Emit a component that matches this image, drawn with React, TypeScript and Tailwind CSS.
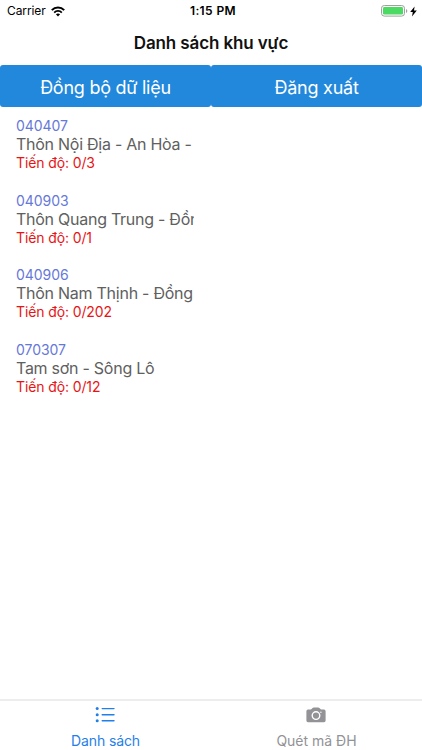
const areas = [
  { code: '040407', name: 'Thôn Nội Địa - An Hòa -', progress: '0/3' },
  { code: '040903', name: 'Thôn Quang Trung - Đồn', progress: '0/1' },
  { code: '040906', name: 'Thôn Nam Thịnh - Đồng', progress: '0/202' },
  { code: '070307', name: 'Tam sơn - Sông Lô', progress: '0/12' },
];

function StatusBar() {
  return (
    <div className="grid h-[22px] grid-cols-3 items-center pl-[7px] pr-[5px] text-black">
      <div className="flex items-center gap-[5px]">
        <span className="text-[12px] leading-none tracking-[-0.1px]">Carrier</span>
        <svg width="14" height="11" viewBox="0 0 14 11" fill="none" stroke="currentColor">
          <path d="M0.8 4.1C4.2 0.5 9.8 0.5 13.2 4.1" strokeWidth="2" />
          <path d="M3.2 6.6C5.3 4.4 8.7 4.4 10.8 6.6" strokeWidth="1.8" />
          <path d="M7 10.4L4.9 8.2C6.1 7.1 7.9 7.1 9.1 8.2Z" fill="currentColor" stroke="none" />
        </svg>
      </div>
      <span className="pl-[2px] text-center text-[12px] font-semibold leading-none tracking-[0.4px]">1:15 PM</span>
      <div className="flex items-center justify-end gap-[2px]">
        <svg width="27" height="12" viewBox="0 0 27 12">
          <rect x="0.5" y="0.5" width="23" height="10.6" rx="2.8" fill="#fff" stroke="#a0a0a0" />
          <rect x="2" y="2" width="20" height="7.6" rx="1.4" fill="#4cd964" />
          <path d="M25 4v4q1.3-.6 1.3-2T25 4Z" fill="#a0a0a0" />
        </svg>
        <svg width="7" height="11" viewBox="0 0 7 11" fill="currentColor">
          <path d="M4.6 0.5L0.2 6h2.6L2 10.5L6.8 4.6H4L4.6 0.5Z" />
        </svg>
      </div>
    </div>
  );
}

function AreaItem({ code, name, progress }: { code: string; name: string; progress: string }) {
  return (
    <li className="h-[74.7px] w-[178px]">
      <p className="text-[14px] leading-[18px] tracking-[-0.05px] text-[#6678d8]">{code}</p>
      <p className="overflow-hidden whitespace-nowrap text-[16px] leading-[19px] tracking-[-0.26px] text-[#606060]">{name}</p>
      <p className="text-[14px] leading-[18px] tracking-[-0.12px] text-[#e81414]">Tiến độ: {progress}</p>
    </li>
  );
}

function TabBar() {
  return (
    <nav className="grid h-[51px] grid-cols-2 border-t-2 border-[#ededed] text-[14px]">
      <button className="flex flex-col items-center pt-[5px] text-[#1f80ea]">
        <svg className="mr-[2px]" width="20" height="18" viewBox="0 0 20 18" fill="none" stroke="currentColor" strokeWidth="1.4" strokeLinecap="round">
          <path d="M7.2 2.6H19M7.2 8.7H19M7.2 14.8H19" />
          <g fill="currentColor" stroke="none">
            <circle cx="2.2" cy="2.6" r="1.5" />
            <circle cx="2.2" cy="8.7" r="1.5" />
            <circle cx="2.2" cy="14.8" r="1.5" />
          </g>
        </svg>
        <span className="mt-[8px] leading-[18px] tracking-[-0.1px]">Danh sách</span>
      </button>
      <button className="flex flex-col items-center pt-[5px] text-[#929297]">
        <svg className="mr-[2px]" width="20" height="18" viewBox="0 0 20 18">
          <path
            d="M2 3.6H5L6.6 2Q7 1.5 7.7 1.5H12.3Q13 1.5 13.4 2L15 3.6H18Q19.6 3.6 19.6 5.2V14.6Q19.6 16.2 18 16.2H2Q.4 16.2 .4 14.6V5.2Q.4 3.6 2 3.6Z"
            fill="currentColor"
          />
          <circle cx="10" cy="9.6" r="3.8" fill="none" stroke="#fff" strokeWidth="1.4" />
          <circle cx="14.9" cy="6.2" r=".7" fill="#fff" />
        </svg>
        <span className="mt-[8px] leading-[18px]">Quét mã ĐH</span>
      </button>
    </nav>
  );
}

export default function App() {
  return (
    <div className="flex h-[750px] w-[422px] flex-col overflow-hidden bg-white font-[Inter,'Liberation_Sans',sans-serif]">
      <StatusBar />
      <h1 className="h-[43px] text-center text-[17px] font-semibold leading-[42px] tracking-[-0.12px] text-[#111]">
        Danh sách khu vực
      </h1>
      <div className="grid h-[42px] grid-cols-2 text-[18px] tracking-[-0.25px] text-white">
        <button className="rounded-[3px] bg-[#2288dc] pt-[2px]">Đồng bộ dữ liệu</button>
        <button className="rounded-[3px] bg-[#2288dc] pt-[2px]">Đăng xuất</button>
      </div>
      <ul className="flex-1 pl-4 pt-[10px]">
        {areas.map((area) => (
          <AreaItem key={area.code} {...area} />
        ))}
      </ul>
      <TabBar />
    </div>
  );
}
